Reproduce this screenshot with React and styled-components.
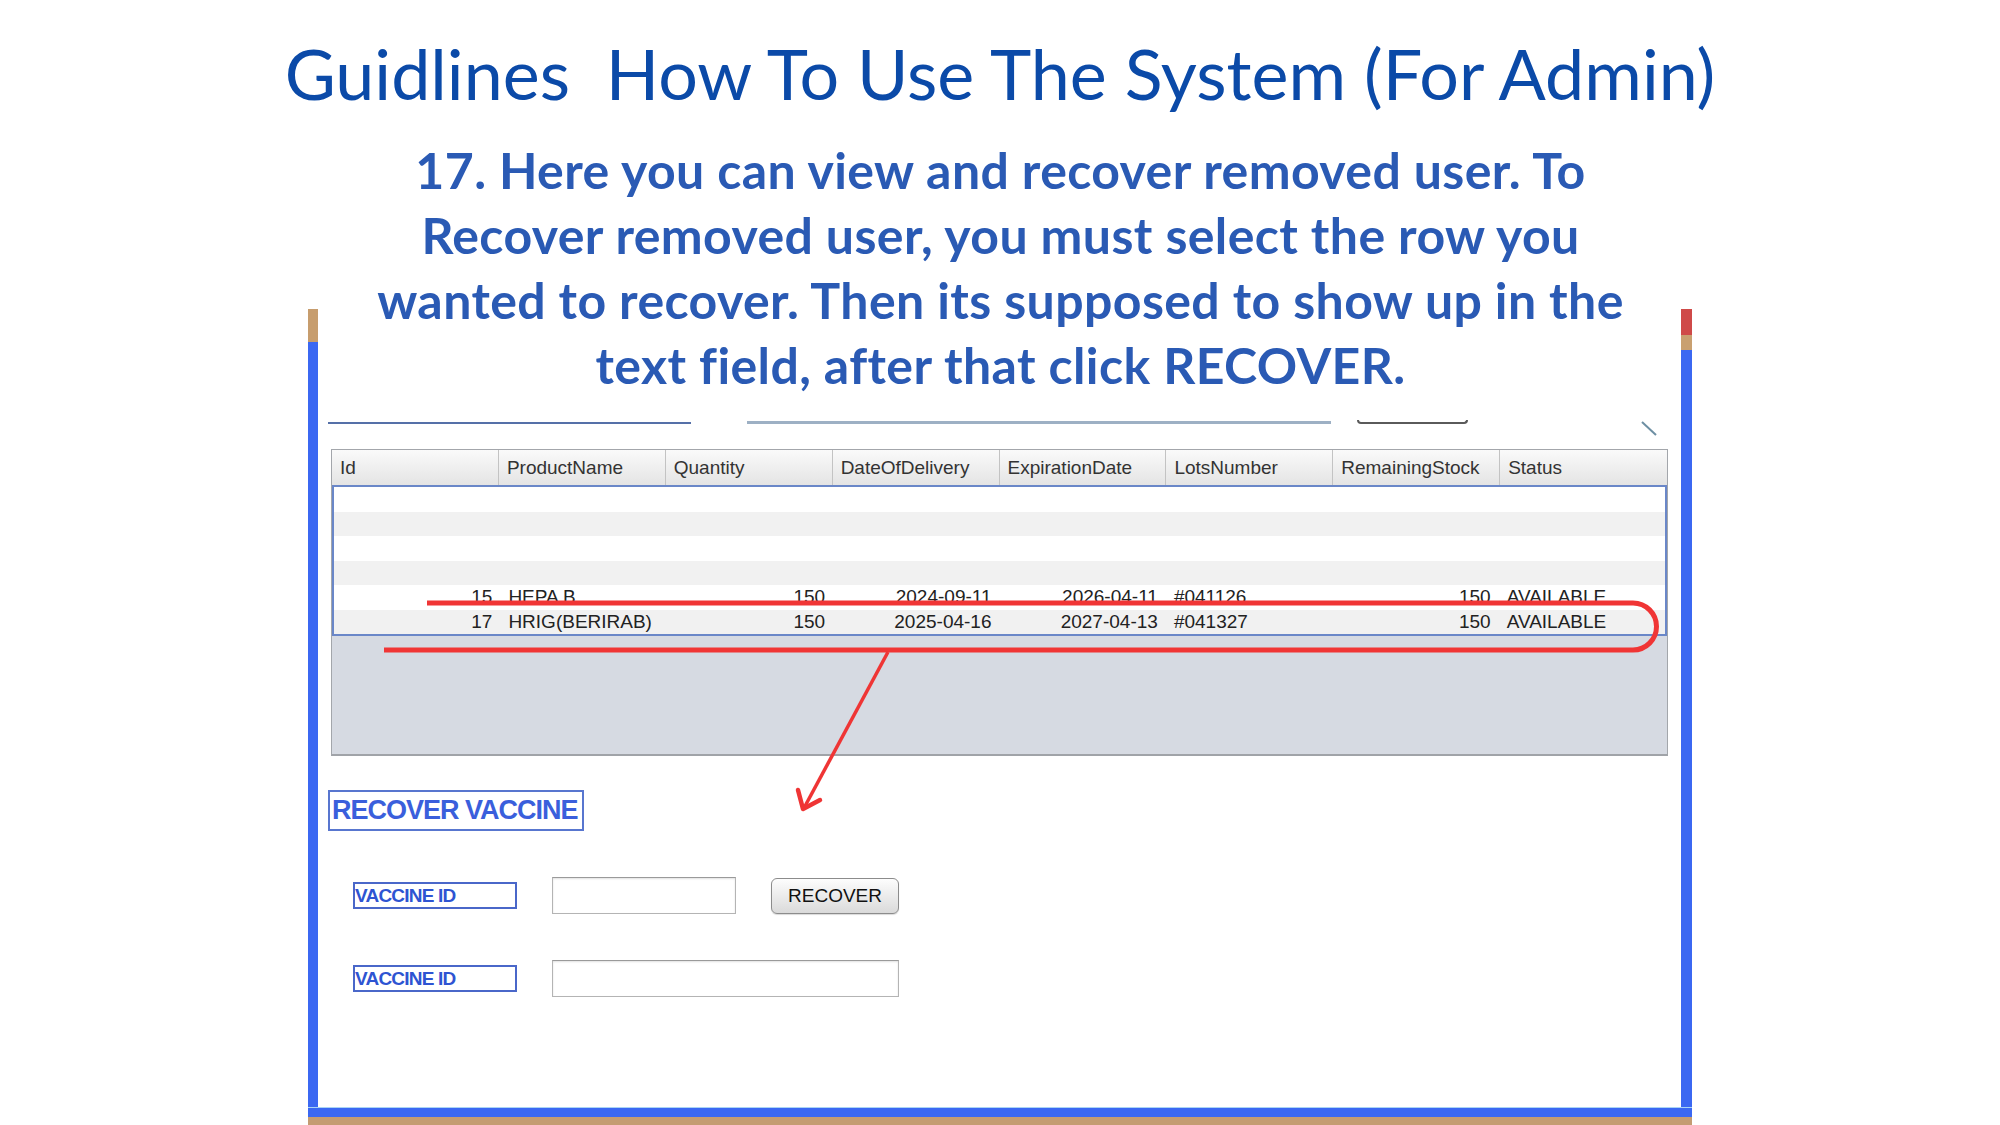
import React from "react";
import styled, { createGlobalStyle } from "styled-components";

const columns = [
  { name: "Id", align: "right" },
  { name: "ProductName", align: "left" },
  { name: "Quantity", align: "right" },
  { name: "DateOfDelivery", align: "right" },
  { name: "ExpirationDate", align: "right" },
  { name: "LotsNumber", align: "left" },
  { name: "RemainingStock", align: "right" },
  { name: "Status", align: "left" },
];

const rows = [
  [],
  [],
  [],
  [],
  ["15", "HEPA B", "150", "2024-09-11", "2026-04-11", "#041126", "150", "AVAILABLE"],
  ["17", "HRIG(BERIRAB)", "150", "2025-04-16", "2027-04-13", "#041327", "150", "AVAILABLE"],
];

const captionLines = [
  "17. Here you can view and recover removed user. To",
  "Recover removed user, you must select the row you",
  "wanted to recover. Then its supposed to show up in the",
  "text field, after that click RECOVER.",
];

const App = () => {
  return (
    <>
      <GlobalStyle />
      <Page>
        <Title>Guidlines&nbsp; How To Use The System (For Admin)</Title>

        <Window>
          <WindowBody>
            <Rail $top="#c79d6e" $topHeight={33} $width={10} />
            <Content>
              <Remnants>
                <FieldEdge $width={363} $color="#5570a8" $thick={2} />
                <FieldEdge $width={584} $color="#9db0c4" $thick={3} $gap={56} />
                <ButtonEdge />
                <Diag width="16" height="15" viewBox="0 0 16 15">
                  <line x1="1" y1="1" x2="15" y2="14" stroke="#6d8fa3" strokeWidth="2" />
                </Diag>
              </Remnants>

              <TablePane>
                <HeaderRow>
                  {columns.map((c) => (
                    <HeaderCell key={c.name}>{c.name}</HeaderCell>
                  ))}
                </HeaderRow>
                <TableBody>
                  {rows.map((r, i) => (
                    <Row key={i} $striped={i % 2 === 1}>
                      {columns.map((c, j) => (
                        <Cell key={c.name} $align={c.align}>
                          {r[j] || ""}
                        </Cell>
                      ))}
                    </Row>
                  ))}
                </TableBody>
              </TablePane>

              <SectionTitle>RECOVER VACCINE</SectionTitle>

              <Form>
                <FieldLabel>VACCINE ID</FieldLabel>
                <TextBox />
                <RecoverButton>RECOVER</RecoverButton>
                <FieldLabel>VACCINE ID</FieldLabel>
                <TextBox $wide />
              </Form>
            </Content>
            <Rail $top="#cf4a48" $topHeight={26} $mid="#c9a070" $midHeight={15} $width={11} />
          </WindowBody>
          <BottomBar />
          <BottomTan />
        </Window>

        <Caption>
          {captionLines.map((l) => (
            <CaptionLine key={l}>{l}</CaptionLine>
          ))}
        </Caption>

        <Annotation width="2000" height="1125" viewBox="0 0 2000 1125">
          <path
            d="M427 603 H1633 A23.5 23.5 0 0 1 1633 650 H384"
            fill="none"
            stroke="#f03535"
            strokeWidth="5"
          />
          <line x1="888" y1="652" x2="804" y2="808" stroke="#ef3535" strokeWidth="3.5" />
          <polyline
            points="798,790 803,809 820,800"
            fill="none"
            stroke="#ef3535"
            strokeWidth="4.5"
            strokeLinecap="round"
            strokeLinejoin="round"
          />
        </Annotation>
      </Page>
    </>
  );
};

export default App;

const GlobalStyle = createGlobalStyle`
  html, body {
    margin: 0;
    padding: 0;
    background: #ffffff;
    overflow: hidden;
  }
  * {
    box-sizing: border-box;
  }
`;

const Page = styled.div`
  position: relative;
  width: 2000px;
  height: 1125px;
  display: flex;
  flex-direction: column;
  align-items: center;
  background: #ffffff;
  overflow: hidden;
`;

const Title = styled.h1`
  margin: 38px 0 0;
  font-family: Lato, "Liberation Sans", sans-serif;
  font-weight: 400;
  font-size: 70px;
  line-height: 70px;
  color: #0b4aa8;
  white-space: nowrap;
`;

const Caption = styled.div`
  position: absolute;
  top: 138px;
  left: 320px;
  width: 1361px;
  padding-bottom: 20px;
  background: #ffffff;
  text-align: center;
  font-family: Lato, "Liberation Sans", sans-serif;
  font-weight: 700;
  font-size: 50px;
  letter-spacing: 0.4px;
  line-height: 65px;
  color: #2a5ab4;
`;

const CaptionLine = styled.span`
  display: block;
  white-space: nowrap;
`;

const Window = styled.div`
  margin-top: 201px;
  width: 1384px;
  flex: 1;
  display: flex;
  flex-direction: column;
`;

const WindowBody = styled.div`
  flex: 1;
  display: flex;
`;

const Rail = styled.div`
  width: ${({ $width }) => $width}px;
  background: linear-gradient(
    to bottom,
    ${({ $top }) => $top} 0,
    ${({ $top }) => $top} ${({ $topHeight }) => $topHeight}px,
    ${({ $mid, $top }) => $mid || $top} ${({ $topHeight }) => $topHeight}px,
    ${({ $mid, $top }) => $mid || $top} ${({ $topHeight, $midHeight = 0 }) => $topHeight + $midHeight}px,
    #3b68f2 ${({ $topHeight, $midHeight = 0 }) => $topHeight + $midHeight}px
  );
`;

const Content = styled.div`
  flex: 1;
  background: #ffffff;
  padding: 0 10px;
  display: flex;
  flex-direction: column;
`;

const BottomBar = styled.div`
  height: 10px;
  background: #3b68f2;
  border-top: 1px solid #a9d4f5;
`;

const BottomTan = styled.div`
  height: 8px;
  background: #c49c72;
`;

const Remnants = styled.div`
  height: 127px;
  padding-top: 111px;
  display: flex;
  align-items: flex-start;
`;

const FieldEdge = styled.div`
  width: ${({ $width }) => $width}px;
  height: 4px;
  margin-left: ${({ $gap = 0 }) => $gap}px;
  border-bottom: ${({ $thick }) => $thick}px solid ${({ $color }) => $color};
`;

const ButtonEdge = styled.div`
  width: 111px;
  height: 4px;
  margin-left: 26px;
  border: 2px solid #5a5a5a;
  border-top: none;
  border-radius: 0 0 7px 7px;
`;

const Diag = styled.svg`
  margin-left: 173px;
  margin-top: 1px;
`;

const TablePane = styled.div`
  margin: 13px 0 0 3px;
  width: 1337px;
  height: 307px;
  border: 1px solid #a3a6ab;
  border-bottom: 2px solid #a0a3a8;
  background: #d6dae2;
  display: flex;
  flex-direction: column;
  font-family: "Liberation Sans", Arial, sans-serif;
  font-size: 19px;
`;

const HeaderRow = styled.div`
  display: grid;
  grid-template-columns: repeat(8, 1fr);
  height: 35px;
  background: linear-gradient(to bottom, #fafafa, #e4e4e4);
`;

const HeaderCell = styled.div`
  padding-left: 8px;
  line-height: 35px;
  color: #333333;
  border-right: 1px solid #c3c3c3;
  white-space: nowrap;

  &:last-child {
    border-right: none;
  }
`;

const TableBody = styled.div`
  border: 2px solid #6a87c8;
  background: #ffffff;
`;

const Row = styled.div`
  display: grid;
  grid-template-columns: repeat(8, 1fr);
  height: 24.5px;
  background: ${({ $striped }) => ($striped ? "#f1f1f1" : "#ffffff")};
`;

const Cell = styled.div`
  padding: 0 8px;
  line-height: 24.5px;
  text-align: ${({ $align }) => $align};
  color: #222222;
  white-space: nowrap;
`;

const SectionTitle = styled.div`
  margin-top: 34px;
  width: 256px;
  height: 41px;
  display: flex;
  align-items: center;
  padding-left: 2px;
  border: 2px solid #5876cf;
  background: #ffffff;
  font-family: "Liberation Sans", Arial, sans-serif;
  font-weight: 700;
  font-size: 27px;
  letter-spacing: -1px;
  color: #3a5fdc;
  white-space: nowrap;
`;

const Form = styled.div`
  margin-top: 46px;
  padding-left: 25px;
  display: grid;
  grid-template-columns: 164px 184px 128px;
  grid-auto-rows: 37px;
  column-gap: 35px;
  row-gap: 46px;
  align-items: center;
  font-family: "Liberation Sans", Arial, sans-serif;
`;

const FieldLabel = styled.div`
  height: 27px;
  border: 2px solid #4a67c9;
  display: flex;
  align-items: center;
  font-weight: 700;
  font-size: 19px;
  letter-spacing: -0.8px;
  color: #2e54d2;
  white-space: nowrap;
`;

const TextBox = styled.div`
  grid-column: ${({ $wide }) => ($wide ? "2 / span 2" : "auto")};
  height: 37px;
  border: 1px solid #b4b4b4;
  border-top-color: #9a9a9a;
  background: #ffffff;
  box-shadow: inset 0 1px 2px rgba(0, 0, 0, 0.12);
`;

const RecoverButton = styled.div`
  height: 36px;
  border: 1px solid #8c8c8c;
  border-radius: 6px;
  background: linear-gradient(to bottom, #fdfdfd, #dadada);
  box-shadow: 0 1px 1px rgba(0, 0, 0, 0.15);
  display: flex;
  align-items: center;
  justify-content: center;
  font-size: 19px;
  color: #111111;
`;

const Annotation = styled.svg`
  position: absolute;
  top: 0;
  left: 0;
  pointer-events: none;
`;
